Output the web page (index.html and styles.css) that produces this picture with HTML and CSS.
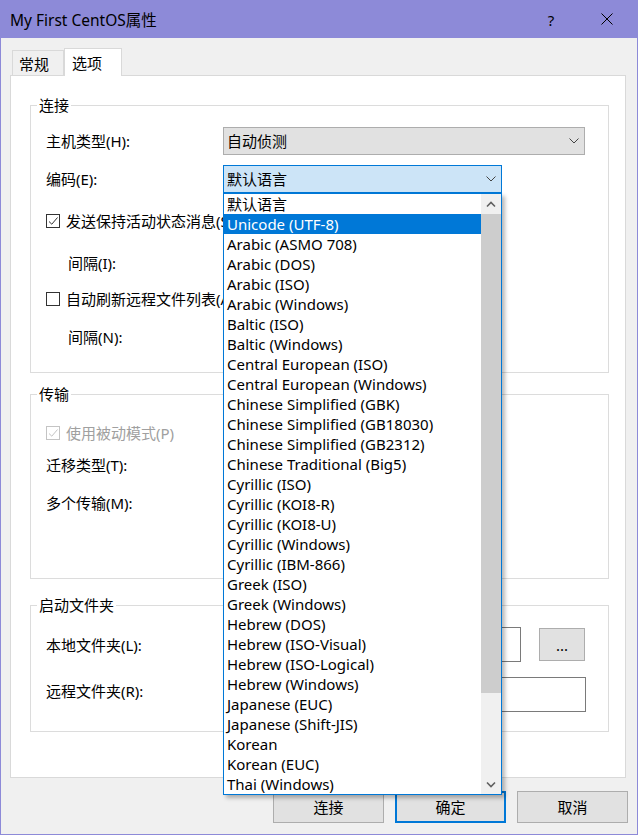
FILE: index.html
```html
<!DOCTYPE html>
<html lang="zh-CN">
<head>
<meta charset="utf-8">
<title>My First CentOS属性</title>
<link rel="stylesheet" href="styles.css">
</head>
<body>
<div class="window">
  <div class="titlebar">
    <span class="title">My First CentOS属性</span>
    <span class="cap-btn help">?</span>
    <span class="cap-btn close">
      <svg width="12" height="12" viewBox="0 0 12 12"><path d="M0.5 0.5 L11.5 11.5 M11.5 0.5 L0.5 11.5" stroke="#000" stroke-width="1" fill="none"/></svg>
    </span>
  </div>
  <div class="client">
    <div class="tabs">
      <div class="tab">常规</div>
      <div class="tab active">选项</div>
    </div>
    <div class="panel">
      <div class="group g-conn">
        <div class="legend">连接</div>
        <div class="row row-combo r-c1">
          <span class="lbl">主机类型(H):</span>
          <div class="combo combo-wide">
            <span>自动侦测</span>
            <svg class="chev" width="10" height="6" viewBox="0 0 10 6"><path d="M0.5 0.5 L5 5 L9.5 0.5" stroke="#444" stroke-width="1" fill="none"/></svg>
          </div>
        </div>
        <div class="row row-combo r-c2">
          <span class="lbl">编码(E):</span>
          <div class="combo-wrap">
            <div class="combo combo-enc focus">
              <span>默认语言</span>
              <svg class="chev" width="10" height="6" viewBox="0 0 10 6"><path d="M0.5 0.5 L5 5 L9.5 0.5" stroke="#444" stroke-width="1" fill="none"/></svg>
            </div>
            <div class="dropdown">
              <div class="items">
                <div class="item">默认语言</div>
                <div class="item sel">Unicode (UTF-8)</div>
                <div class="item">Arabic (ASMO 708)</div>
                <div class="item">Arabic (DOS)</div>
                <div class="item">Arabic (ISO)</div>
                <div class="item">Arabic (Windows)</div>
                <div class="item">Baltic (ISO)</div>
                <div class="item">Baltic (Windows)</div>
                <div class="item">Central European (ISO)</div>
                <div class="item">Central European (Windows)</div>
                <div class="item">Chinese Simplified (GBK)</div>
                <div class="item">Chinese Simplified (GB18030)</div>
                <div class="item">Chinese Simplified (GB2312)</div>
                <div class="item">Chinese Traditional (Big5)</div>
                <div class="item">Cyrillic (ISO)</div>
                <div class="item">Cyrillic (KOI8-R)</div>
                <div class="item">Cyrillic (KOI8-U)</div>
                <div class="item">Cyrillic (Windows)</div>
                <div class="item">Cyrillic (IBM-866)</div>
                <div class="item">Greek (ISO)</div>
                <div class="item">Greek (Windows)</div>
                <div class="item">Hebrew (DOS)</div>
                <div class="item">Hebrew (ISO-Visual)</div>
                <div class="item">Hebrew (ISO-Logical)</div>
                <div class="item">Hebrew (Windows)</div>
                <div class="item">Japanese (EUC)</div>
                <div class="item">Japanese (Shift-JIS)</div>
                <div class="item">Korean</div>
                <div class="item">Korean (EUC)</div>
                <div class="item">Thai (Windows)</div>
              </div>
              <div class="scrollbar">
                <div class="sb-btn"><svg width="10" height="7" viewBox="0 0 10 7"><path d="M1 5.5 L5 1.5 L9 5.5" stroke="#606060" stroke-width="1.6" fill="none"/></svg></div>
                <div class="sb-thumb"></div>
                <div class="sb-track"></div>
                <div class="sb-btn"><svg width="10" height="7" viewBox="0 0 10 7"><path d="M1 1.5 L5 5.5 L9 1.5" stroke="#606060" stroke-width="1.6" fill="none"/></svg></div>
              </div>
            </div>
          </div>
        </div>
        <div class="row r-c3">
          <span class="check"><svg width="12" height="12" viewBox="0 0 12 12"><path d="M2 6.5 L4.8 9.2 L10.5 2.5" stroke="#333" stroke-width="1" fill="none"/></svg></span>
          <span class="chk-text">发送保持活动状态消息(S)</span>
        </div>
        <div class="row r-c4">
          <span class="lbl indent">间隔(I):</span>
        </div>
        <div class="row r-c5">
          <span class="check"></span>
          <span class="chk-text">自动刷新远程文件列表(A)</span>
        </div>
        <div class="row r-c6">
          <span class="lbl indent">间隔(N):</span>
        </div>
      </div>

      <div class="group g-xfer">
        <div class="legend">传输</div>
        <div class="row r-x1 disabled">
          <span class="check"><svg width="12" height="12" viewBox="0 0 12 12"><path d="M2 6.5 L4.8 9.2 L10.5 2.5" stroke="#c4c4c4" stroke-width="1" fill="none"/></svg></span>
          <span class="chk-text">使用被动模式(P)</span>
        </div>
        <div class="row r-x2">
          <span class="lbl">迁移类型(T):</span>
        </div>
        <div class="row r-x3">
          <span class="lbl">多个传输(M):</span>
        </div>
      </div>

      <div class="group g-start">
        <div class="legend">启动文件夹</div>
        <div class="row row-field r-s1">
          <span class="lbl">本地文件夹(L):</span>
          <div class="field field-local"></div>
          <div class="btn-browse">...</div>
        </div>
        <div class="row row-field r-s2">
          <span class="lbl lbl-top">远程文件夹(R):</span>
          <div class="field field-remote"></div>
        </div>
      </div>
    </div>
    <div class="buttons">
      <div class="btn">连接</div>
      <div class="btn default">确定</div>
      <div class="btn">取消</div>
    </div>
  </div>
</div>
</body>
</html>
```
FILE: styles.css
```css
* { box-sizing: border-box; }
html, body { margin: 0; padding: 0; }
body {
  width: 638px;
  height: 835px;
  font-family: "Noto Sans", "Noto Sans CJK SC", sans-serif;
  font-size: 15px;
  color: #000;
  background: #f0f0f0;
  overflow: hidden;
}
.window {
  width: 638px;
  height: 835px;
  display: flex;
  flex-direction: column;
  background: #f0f0f0;
  border: 1px solid #8d8ad8;
  border-top: 0;
}
.titlebar {
  height: 38px;
  flex: none;
  background: #8d8ad8;
  display: flex;
  align-items: center;
  padding: 0 2px 0 9px;
}
.title {
  flex: 1;
  font-size: 15.5px;
  line-height: 20px;
  margin-top: 2px;
}
.cap-btn {
  width: 57px;
  height: 38px;
  display: flex;
  align-items: center;
  justify-content: center;
}
.help { font-size: 15px; padding-top: 1px; padding-left: 3px; }

.client {
  flex: 1;
  display: flex;
  flex-direction: column;
  padding: 10px 9px 11px 9px;
}
.tabs {
  height: 28px;
  margin: 0 0 -1px 2px;
  display: flex;
  align-items: flex-end;
}
.tab {
  width: 52px;
  height: 26px;
  border: 1px solid #d9d9d9;
  border-bottom: 0;
  background: #f0f0f0;
  display: flex;
  align-items: center;
  padding-left: 6px;
  line-height: 20px;
}
.tab.active {
  width: 58px;
  height: 28px;
  background: #fff;
  padding-left: 7px;
  position: relative;
  z-index: 2;
}
.panel {
  position: relative;
  height: 703px;
  margin-right: 2px;
  background: #fff;
  border: 1px solid #d9d9d9;
  padding: 29px 16px 0 19px;
  display: flex;
  flex-direction: column;
}
.group {
  border: 1px solid #dcdcdc;
  display: flex;
  flex-direction: column;
  padding-left: 15px;
  flex: none;
}
.g-conn { height: 268px; }
.g-xfer { height: 185px; margin-top: 21px; }
.g-start { height: 127px; margin-top: 26px; }
.legend {
  align-self: flex-start;
  height: 20px;
  line-height: 20px;
  margin: -11px 0 0 -9px;
  padding: 0 2px;
  background: #fff;
}
.row {
  display: flex;
  align-items: center;
  height: 20px;
  line-height: 20px;
  flex: none;
}
.lbl { width: 177px; flex: none; white-space: nowrap; }
.lbl.indent { padding-left: 22px; }
.row-combo { height: 28px; }
.row-field { height: 35px; }
.r-c1 { margin-top: 12px; }
.r-c2 { margin-top: 10px; }
.r-c3 { margin-top: 18px; }
.r-c4 { margin-top: 22px; }
.r-c5 { margin-top: 16px; }
.r-c6 { margin-top: 18px; }
.r-x1 { margin-top: 19px; }
.r-x2 { margin-top: 12px; }
.r-x3 { margin-top: 18px; }
.r-s1 { margin-top: 12px; }
.r-s2 { margin-top: 15px; align-items: flex-start; }
.lbl-top { margin-top: 4px; }

.check {
  width: 14px;
  height: 14px;
  border: 1px solid #333;
  background: #fff;
  flex: none;
  display: flex;
  align-items: center;
  justify-content: center;
  margin-top: -1px;
}
.chk-text { margin-left: 6px; white-space: nowrap; }
.disabled { color: #a0a0a0; }
.disabled .check { border-color: #c4c4c4; }

.combo {
  height: 28px;
  border: 1px solid #adadad;
  background: #e1e1e1;
  display: flex;
  align-items: center;
  justify-content: space-between;
  padding: 0 5px 0 3px;
}
.combo-wide { width: 362px; }
.combo-enc { width: 279px; }
.combo.focus { border-color: #0078d7; background: #cce4f7; }
.combo-wrap { position: relative; }

.dropdown {
  position: absolute;
  top: 100%;
  left: 0;
  width: 279px;
  height: 602px;
  border: 1px solid #0078d7;
  background: #fff;
  display: flex;
  z-index: 10;
  box-shadow: 3px 3px 4px rgba(0, 0, 0, 0.28);
}
.items { width: 257px; flex: none; overflow: hidden; }
.item {
  height: 20px;
  line-height: 20px;
  padding-left: 3px;
  white-space: nowrap;
  font-size: 15px;
}
.item.sel { background: #0078d7; color: #fff; }
.scrollbar {
  width: 20px;
  flex: none;
  background: #f0f0f0;
  display: flex;
  flex-direction: column;
}
.sb-btn {
  height: 20px;
  flex: none;
  display: flex;
  align-items: center;
  justify-content: center;
}
.sb-thumb { height: 479px; background: #cdcdcd; flex: none; }
.sb-track { flex: 1; }

.field {
  height: 35px;
  border: 1px solid #7a7a7a;
  background: #fff;
  flex: none;
}
.field-local { width: 298px; }
.field-remote { width: 363px; }
.btn-browse {
  width: 46px;
  height: 33px;
  margin-left: 18px;
  border: 1px solid #adadad;
  background: #e1e1e1;
  display: flex;
  align-items: center;
  justify-content: center;
  flex: none;
  line-height: 20px;
}

.buttons {
  display: flex;
  justify-content: flex-end;
  gap: 11px;
  margin-top: 13px;
}
.btn {
  width: 111px;
  height: 32px;
  border: 1px solid #adadad;
  background: #e1e1e1;
  display: flex;
  align-items: center;
  justify-content: center;
  line-height: 20px;
}
.btn.default { border: 2px solid #0078d7; }
```
